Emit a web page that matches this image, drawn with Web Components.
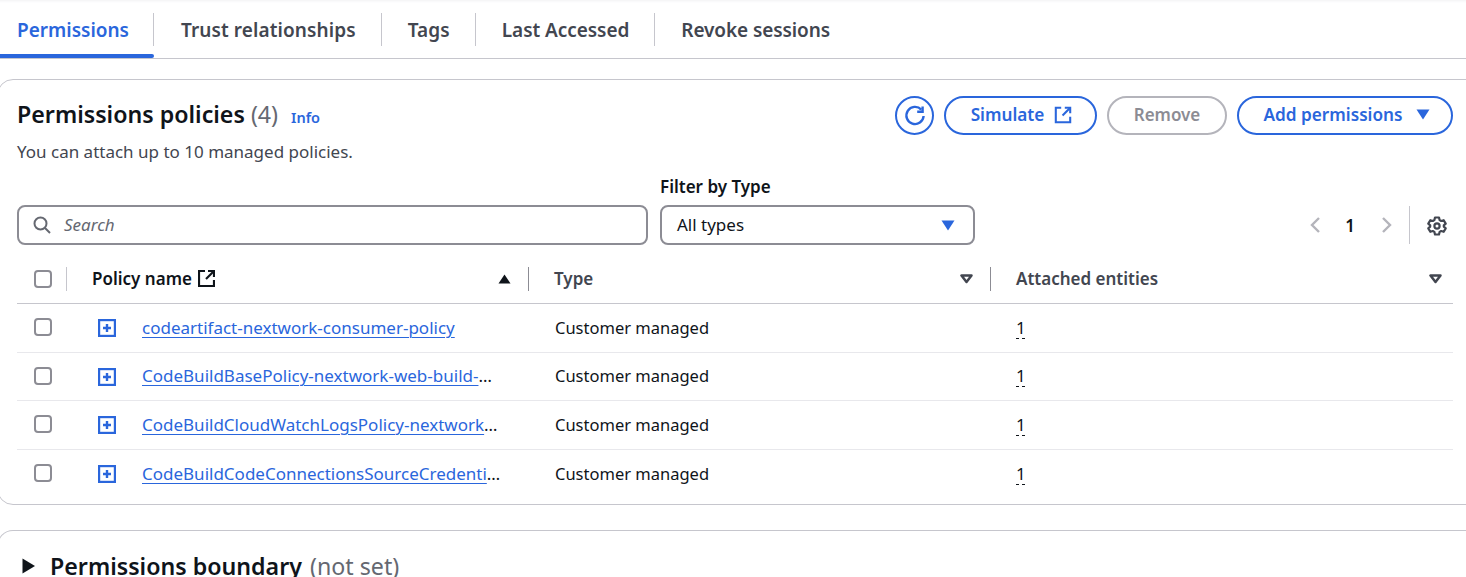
<!DOCTYPE html>
<html>
<head>
<meta charset="utf-8">
<title>Permissions</title>
<style>
  html, body { margin: 0; padding: 0; background: #fff; overflow: hidden; }
  body { font-family: "Noto Sans", sans-serif; color: #16191f; width: 1466px; height: 577px; }
</style>
</head>
<body>
<role-tabs>
  <role-tab active>Permissions</role-tab>
  <role-tab style="letter-spacing:.1px">Trust relationships</role-tab>
  <role-tab style="letter-spacing:.1px">Tags</role-tab>
  <role-tab style="letter-spacing:-.05px">Last Accessed</role-tab>
  <role-tab style="letter-spacing:-.1px" last>Revoke sessions</role-tab>
</role-tabs>
<policy-card>
  <policy-toolbar></policy-toolbar>
  <policy-filters></policy-filters>
  <policy-table>
    <policy-row name="codeartifact-nextwork-consumer-policy"></policy-row>
    <policy-row name="CodeBuildBasePolicy-nextwork-web-build-" cut></policy-row>
    <policy-row name="CodeBuildCloudWatchLogsPolicy-nextwork" cut></policy-row>
    <policy-row name="CodeBuildCodeConnectionsSourceCredenti" cut last></policy-row>
  </policy-table>
</policy-card>
<boundary-card></boundary-card>

<script>
const BLUE = "#2a66dc";

// tabs
class RoleTabs extends HTMLElement {
  constructor() {
    super();
    this.attachShadow({ mode: "open" }).innerHTML = `
      <style>
        :host { display: flex; height: 58px; border-bottom: 1px solid #c6c6cd; box-sizing: content-box;
          box-shadow: inset 0 4px 3px -3px #f1f1f3; }
      </style>
      <slot></slot>`;
  }
}
customElements.define("role-tabs", RoleTabs);

class RoleTab extends HTMLElement {
  constructor() {
    super();
    this.attachShadow({ mode: "open" }).innerHTML = `
      <style>
        :host { display: flex; align-items: center; height: 58px; padding: 0 26px; box-sizing: border-box;
          position: relative; font-size: 19px; font-weight: 600; color: #424650; }
        :host([active]) { color: ${BLUE}; padding-left: 17px; }
        :host([active])::before { content: ""; position: absolute; left: 0; right: 1px; bottom: 0; height: 4px;
          background: ${BLUE}; border-radius: 0 2px 2px 0; }
        :host::after { content: ""; position: absolute; right: 0; top: 13px; height: 33px; width: 1px; background: #c6c6cd; }
        :host([active])::after { right: 1px; }
        :host([last])::after { display: none; }
        span { position: relative; top: 1px; }
      </style>
      <span><slot></slot></span>`;
  }
}
customElements.define("role-tab", RoleTab);

// outer card
class PolicyCard extends HTMLElement {
  constructor() {
    super();
    this.attachShadow({ mode: "open" }).innerHTML = `
      <style>
        :host { display: block; margin: 20px -20px 0 -3px; padding: 0 32px 0 19px; height: 426px; box-sizing: border-box;
          border: 1px solid #c6c6cd; border-radius: 16px; background: #fff; }
      </style>
      <slot></slot>`;
  }
}
customElements.define("policy-card", PolicyCard);

// pill button
class PillButton extends HTMLElement {
  constructor() {
    super();
    this.attachShadow({ mode: "open" }).innerHTML = `
      <style>
        :host { display: inline-flex; align-items: center; justify-content: center; gap: 10px; height: 39px; box-sizing: border-box;
          border: 2px solid ${BLUE}; border-radius: 20px; color: ${BLUE}; font-size: 17.2px; font-weight: 600; padding-bottom: 2px; }
        :host([disabled]) { border-color: #b4b4bb; color: #8c8c94; font-size: 17px; }
        ::slotted(svg) { display: block; }
      </style>
      <slot></slot>`;
  }
}
customElements.define("pill-button", PillButton);

// title row with actions
class PolicyToolbar extends HTMLElement {
  constructor() {
    super();
    this.attachShadow({ mode: "open" }).innerHTML = `
      <style>
        :host { display: flex; justify-content: space-between; padding-top: 16px; }
        h2 { margin: -1px 0 0; font-size: 23.2px; line-height: 38px; font-weight: 600; color: #0f141a; white-space: nowrap; }
        h2 em { font-style: normal; font-weight: 400; color: #656871; }
        h2 a { font-size: 14.5px; color: ${BLUE}; margin-left: 7px; }
        p { margin: 0; font-size: 17px; line-height: 24px; color: #424650; padding-top: 4px; }
        .actions { display: flex; gap: 10px; }
        .refresh { width: 39px; padding-bottom: 0; }
      </style>
      <div>
        <h2>Permissions policies <em>(4)</em> <a>Info</a></h2>
        <p>You can attach up to 10 managed policies.</p>
      </div>
      <div class="actions">
        <pill-button class="refresh">
          <svg width="22" height="22" viewBox="0 0 22 22" fill="none" stroke="${BLUE}" stroke-width="2.4">
            <path d="M17.3 4.6A8.6 8.6 0 1 0 19.6 11"/><path d="M18.6 1.4v5.4h-5.4"/>
          </svg>
        </pill-button>
        <pill-button style="width:153px;padding-left:2px">Simulate
          <svg width="18" height="18" viewBox="0 0 20 20" fill="none" stroke="${BLUE}" stroke-width="2.3">
            <path d="M8 2H2v16h16v-6"/><path d="M12 2h6v6" /><path d="M18 2 9.5 10.5"/>
          </svg>
        </pill-button>
        <pill-button disabled style="width:120px">Remove</pill-button>
        <pill-button style="width:216px;gap:13px;padding-left:3px">Add permissions
          <svg width="14" height="11" viewBox="0 0 14 11"><path d="M0.5 0.5h13L7 10.5z" fill="${BLUE}"/></svg>
        </pill-button>
      </div>`;
  }
}
customElements.define("policy-toolbar", PolicyToolbar);

// search + select + pagination
class PolicyFilters extends HTMLElement {
  constructor() {
    super();
    this.attachShadow({ mode: "open" }).innerHTML = `
      <style>
        :host { display: flex; align-items: flex-end; margin-top: 12px; font-size: 17px; }
        .box { display: flex; align-items: center; height: 40px; box-sizing: border-box; border: 2px solid #8c8c94; border-radius: 8px; }
        .box span { margin-top: -2px; }
        .search { width: 631px; padding-left: 14px; gap: 13px; color: #656871; font-style: italic; }
        .field { margin-left: 12px; }
        label { display: block; font-weight: 600; line-height: 22px; margin-bottom: 7px; color: #0f141a; }
        .select { width: 315px; padding: 0 18px 0 15px; justify-content: space-between; color: #0f141a; }
        .pager { flex: 1; display: flex; align-items: center; height: 40px; justify-content: flex-end; padding-right: 6px; }
        .pager b { font-weight: 600; color: #0f141a; margin: 0 26px 0 24px; }
        .sep { width: 1px; height: 38px; background: #c6c6cd; margin: 0 17px 0 16px; }
        .gear { margin-top: 2px; }
      </style>
      <div class="box search">
        <svg width="18" height="18" viewBox="0 0 18 18" fill="none" stroke="#656871" stroke-width="2"><circle cx="7.5" cy="7.5" r="6"/><path d="m12 12 5 5"/></svg>
        <span>Search</span>
      </div>
      <div class="field">
        <label>Filter by Type</label>
        <div class="box select"><span>All types</span>
          <svg width="14" height="11" viewBox="0 0 14 11"><path d="M0.5 0.5h13L7 10.5z" fill="${BLUE}"/></svg>
        </div>
      </div>
      <div class="pager">
        <svg width="12" height="18" viewBox="0 0 12 18" fill="none" stroke="#b4b4bb" stroke-width="2.4"><path d="M10 2 3 9l7 7"/></svg>
        <b>1</b>
        <svg width="12" height="18" viewBox="0 0 12 18" fill="none" stroke="#b4b4bb" stroke-width="2.4"><path d="m2 2 7 7-7 7"/></svg>
        <div class="sep"></div>
        <svg class="gear" width="20" height="20" viewBox="0 0 20 20" fill="none" stroke="#424650" stroke-width="2.2" stroke-linejoin="round">
          <circle cx="10" cy="10" r="2.6"/>
          <path d="M8 1.5h4l.6 2.6 1.6.9 2.5-.8 2 3.4-1.9 1.8v1.2l1.9 1.8-2 3.4-2.5-.8-1.6.9-.6 2.6H8l-.6-2.6-1.6-.9-2.5.8-2-3.4 1.9-1.8V9.4L1.3 7.6l2-3.4 2.5.8 1.6-.9z"/>
        </svg>
      </div>`;
  }
}
customElements.define("policy-filters", PolicyFilters);

const COLUMNS = "49px 1px 461px 1px 461px 1px 1fr";

// table, header lives in the shadow and rows are slotted
class PolicyTable extends HTMLElement {
  constructor() {
    super();
    this.attachShadow({ mode: "open" }).innerHTML = `
      <style>
        :host { display: block; margin-top: 9px; font-size: 17px; }
        .head { display: grid; grid-template-columns: ${COLUMNS}; align-items: center; height: 49px; border-bottom: 1px solid #c6c6cd; box-sizing: content-box; font-weight: 600; color: #424650; }
        .sep { width: 1px; height: 24px; background: #8c8c94; }
        .sep.light { background: #c6c6cd; }
        .cell { display: flex; align-items: center; justify-content: space-between; padding: 0 17px 0 25px; }
        .name { color: #0f141a; }
        .name span { display: flex; gap: 6px; align-items: center; }
        .box { width: 18px; height: 18px; border: 2px solid #8c8c94; border-radius: 4px; box-sizing: border-box; margin-left: 17px; }
        .cell.last { padding-right: 11px; }
      </style>
      <div class="head">
        <div class="box"></div><div class="sep light"></div>
        <div class="cell name"><span>Policy name
          <svg width="17" height="17" viewBox="0 0 17 17" fill="none" stroke="#0f141a" stroke-width="2.2"><path d="M7 1H1v15h15v-6"/><path d="M10 1h6v6"/><path d="M16 1 8 9"/></svg></span>
          <svg width="13" height="10" viewBox="0 0 13 10"><path d="M0.5 9.5h12L6.5 0.5z" fill="#0f141a"/></svg>
        </div><div class="sep"></div>
        <div class="cell">Type
          <svg width="13" height="10" viewBox="0 0 13 10" fill="none" stroke="#424650" stroke-width="2.5"><path d="M1.5 1.5h10L6.5 8z" stroke-linejoin="round"/></svg>
        </div><div class="sep"></div>
        <div class="cell last">Attached entities
          <svg width="13" height="10" viewBox="0 0 13 10" fill="none" stroke="#424650" stroke-width="2.5"><path d="M1.5 1.5h10L6.5 8z" stroke-linejoin="round"/></svg>
        </div>
      </div>
      <slot></slot>`;
  }
}
customElements.define("policy-table", PolicyTable);

class PolicyRow extends HTMLElement {
  constructor() {
    super();
    this.attachShadow({ mode: "open" }).innerHTML = `
      <style>
        :host { display: grid; grid-template-columns: 75px 50px 361px 462px 1fr; align-items: center; height: 48.5px; box-sizing: border-box;
          padding-bottom: 1.2px; border-bottom: 1px solid #e8e8ec; font-size: 17px; color: #0f141a; }
        :host([last]) { border-bottom: 0; }
        .box { width: 18px; height: 18px; border: 2px solid #8c8c94; border-radius: 4px; box-sizing: border-box; margin-left: 17px; }
        svg { display: block; margin: 2px 0 0 6px; }
        .link { white-space: nowrap; color: #0f141a; }
        .link a { color: ${BLUE}; text-decoration: underline; text-underline-offset: 3px; text-decoration-thickness: 1px; }
        .count { text-decoration: underline dashed 1px; text-underline-offset: 4px; }
        .type { padding-left: 52px; font-size: 16.5px; }
        .num { padding-left: 51px; }
      </style>
      <div class="box"></div>
      <svg width="18" height="18" viewBox="0 0 18 18" fill="none" stroke="${BLUE}"><rect x="1" y="1" width="16" height="16" stroke-width="2.4"/><path d="M9 5v8M5 9h8" stroke-width="2.4"/></svg>
      <div class="link"><a></a><span></span></div>
      <div class="type">Customer managed</div>
      <div class="num"><span class="count">1</span></div>`;
    this.shadowRoot.querySelector("a").textContent = this.getAttribute("name");
    // names are already shortened as on screen, the dots stay out of the link
    if (this.hasAttribute("cut")) this.shadowRoot.querySelector(".link span").textContent = "…";
  }
}
customElements.define("policy-row", PolicyRow);

// second card, cut off by the window
class BoundaryCard extends HTMLElement {
  constructor() {
    super();
    this.attachShadow({ mode: "open" }).innerHTML = `
      <style>
        :host { display: flex; align-items: center; gap: 15px; margin: 25px -20px 0 -3px; padding: 10px 0 0 24px; height: 60px; box-sizing: border-box;
          border: 1px solid #c6c6cd; border-radius: 16px 16px 0 0; border-bottom: 0; font-size: 23.2px; font-weight: 600; color: #0f141a; white-space: nowrap; }
        em { font-style: normal; font-weight: 400; color: #656871; margin-left: 2px; }
      </style>
      <svg width="13" height="16" viewBox="0 0 13 16"><path d="M0.5 0.5 13 8 0.5 15.5z" fill="#0f141a"/></svg>
      <div>Permissions boundary <em>(not set)</em></div>`;
  }
}
customElements.define("boundary-card", BoundaryCard);
</script>
</body>
</html>
